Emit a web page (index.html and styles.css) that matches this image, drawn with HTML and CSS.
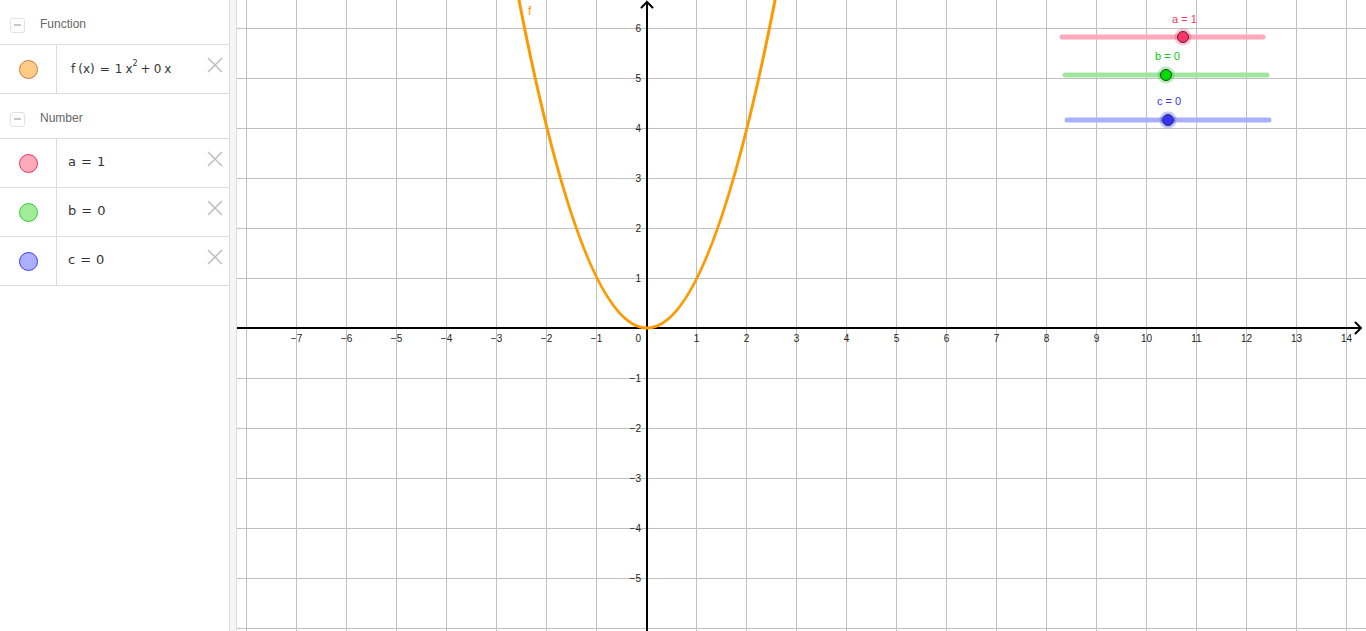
FILE: index.html
```html
<!DOCTYPE html>
<html>
<head>
<meta charset="utf-8">
<link rel="stylesheet" href="styles.css">
</head>
<body>
<div class="app">
  <div class="algebra">
    <div class="header">
      <span class="toggle"><span class="dash"></span></span>
      <span class="htitle">Function</span>
    </div>
    <div class="item">
      <div class="marble-cell"><span class="marble m-f"></span></div>
      <div class="formula fx"><span>f</span><span class="g2">(x)</span><span class="op">=</span><span>1</span><span class="g3">x</span><sup>2</sup><span class="op2">+</span><span>0</span><span class="g3">x</span></div>
      <svg class="close" viewBox="0 0 16 16"><path d="M1 1L15 15M15 1L1 15"/></svg>
    </div>
    <div class="header">
      <span class="toggle"><span class="dash"></span></span>
      <span class="htitle">Number</span>
    </div>
    <div class="item">
      <div class="marble-cell"><span class="marble m-a"></span></div>
      <div class="formula">a<span class="op">=</span>1</div>
      <svg class="close" viewBox="0 0 16 16"><path d="M1 1L15 15M15 1L1 15"/></svg>
    </div>
    <div class="item">
      <div class="marble-cell"><span class="marble m-b"></span></div>
      <div class="formula">b<span class="op">=</span>0</div>
      <svg class="close" viewBox="0 0 16 16"><path d="M1 1L15 15M15 1L1 15"/></svg>
    </div>
    <div class="item">
      <div class="marble-cell"><span class="marble m-c"></span></div>
      <div class="formula">c<span class="op">=</span>0</div>
      <svg class="close" viewBox="0 0 16 16"><path d="M1 1L15 15M15 1L1 15"/></svg>
    </div>
  </div>
  <div class="splitter"></div>
  <div class="graphics">
    <svg class="canvas" width="1129" height="631" viewBox="237 0 1129 631">
      <path class="grid" d="M246.5 0V631M296.5 0V631M346.5 0V631M396.5 0V631M446.5 0V631M496.5 0V631M546.5 0V631M596.5 0V631M646.5 0V631M696.5 0V631M746.5 0V631M796.5 0V631M846.5 0V631M896.5 0V631M946.5 0V631M996.5 0V631M1046.5 0V631M1096.5 0V631M1146.5 0V631M1196.5 0V631M1246.5 0V631M1296.5 0V631M1346.5 0V631M237 28.5H1366M237 78.5H1366M237 128.5H1366M237 178.5H1366M237 228.5H1366M237 278.5H1366M237 378.5H1366M237 428.5H1366M237 478.5H1366M237 528.5H1366M237 578.5H1366M237 628.5H1366"/>
      <path class="axis" d="M237 328H1361M647 631V2"/>
      <path class="arrow" d="M641.5 7.5L647 2L652.5 7.5M1355.5 322.5L1361 328L1355.5 333.5"/>
      <g class="xlab">
        <text x="296.5" y="342">−7</text>
        <text x="346.5" y="342">−6</text>
        <text x="396.5" y="342">−5</text>
        <text x="446.5" y="342">−4</text>
        <text x="496.5" y="342">−3</text>
        <text x="546.5" y="342">−2</text>
        <text x="596.5" y="342">−1</text>
        <text x="696.5" y="342">1</text>
        <text x="746.5" y="342">2</text>
        <text x="796.5" y="342">3</text>
        <text x="846.5" y="342">4</text>
        <text x="896.5" y="342">5</text>
        <text x="946.5" y="342">6</text>
        <text x="996.5" y="342">7</text>
        <text x="1046.5" y="342">8</text>
        <text x="1096.5" y="342">9</text>
        <text x="1146.5" y="342">10</text>
        <text x="1196.5" y="342">11</text>
        <text x="1246.5" y="342">12</text>
        <text x="1296.5" y="342">13</text>
        <text x="1346.5" y="342">14</text>
      </g>
      <g class="ylab">
        <text x="641" y="342">0</text>
        <text x="641" y="32">6</text>
        <text x="641" y="82">5</text>
        <text x="641" y="132">4</text>
        <text x="641" y="182">3</text>
        <text x="641" y="232">2</text>
        <text x="641" y="282">1</text>
        <text x="641" y="382">−1</text>
        <text x="641" y="432">−2</text>
        <text x="641" y="482">−3</text>
        <text x="641" y="532">−4</text>
        <text x="641" y="582">−5</text>
      </g>
      <path class="curve" d="M517 -10Q647 666 777 -10"/>
      <text class="flabel" x="528" y="15">f</text>

      <line class="track t-a" x1="1062" y1="37" x2="1263" y2="37"/>
      <circle class="halo h-a" cx="1183" cy="37" r="8.5"/>
      <circle class="knob k-a" cx="1183" cy="37" r="5.5"/>
      <text class="slabel l-a" x="1172" y="22.5">a = 1</text>

      <line class="track t-b" x1="1065" y1="75" x2="1267" y2="75"/>
      <circle class="halo h-b" cx="1166" cy="75" r="8.5"/>
      <circle class="knob k-b" cx="1166" cy="75" r="5.5"/>
      <text class="slabel l-b" x="1155" y="60">b = 0</text>

      <line class="track t-c" x1="1067" y1="120" x2="1269" y2="120"/>
      <circle class="halo h-c" cx="1168" cy="120" r="8.5"/>
      <circle class="knob k-c" cx="1168" cy="120" r="5.5"/>
      <text class="slabel l-c" x="1157" y="105">c = 0</text>
    </svg>
  </div>
</div>
</body>
</html>
```
FILE: styles.css
```css
html, body {
  margin: 0;
  padding: 0;
  background: #fff;
  overflow: hidden;
}
.app {
  display: flex;
  width: 1366px;
  height: 631px;
}
.algebra {
  width: 229px;
  flex: none;
  border-right: 1px solid #dcdcdc;
  background: #fff;
  font-family: "Liberation Sans", Arial, sans-serif;
}
.splitter {
  width: 6px;
  flex: none;
  background: #f5f5f5;
  border-right: 1px solid #dcdcdc;
}
.graphics {
  flex: 1;
  overflow: hidden;
}
.canvas {
  display: block;
}
.header {
  height: 45px;
  box-sizing: border-box;
  padding-top: 4px;
  border-bottom: 1px solid #dcdcdc;
  display: flex;
  align-items: center;
  padding-left: 10px;
}
.toggle {
  width: 13px;
  height: 13px;
  margin-top: 2px;
  border: 1px solid #e2e2e2;
  border-radius: 3px;
  display: flex;
  align-items: center;
  justify-content: center;
}
.dash {
  width: 7px;
  height: 1.5px;
  background: #c8c8c8;
}
.htitle {
  margin-left: 15px;
  font-size: 12px;
  color: #666;
}
.item {
  height: 48px;
  border-bottom: 1px solid #dcdcdc;
  display: flex;
  align-items: stretch;
}
.marble-cell {
  width: 56px;
  flex: none;
  border-right: 1px solid #dcdcdc;
  display: flex;
  align-items: center;
  justify-content: center;
}
.marble {
  width: 17px;
  height: 17px;
  border-radius: 50%;
  border: 1px solid;
}
.m-f { background: #ffcc88; border-color: #c8773a; }
.m-a { background: #ffaabb; border-color: #ee3355; }
.m-b { background: #a0ec98; border-color: #33cc33; }
.m-c { background: #aab0ff; border-color: #3340ee; }
.formula {
  flex: 1;
  display: flex;
  align-items: center;
  padding-left: 11px;
  padding-bottom: 3px;
  font-family: "DejaVu Sans", sans-serif;
  font-size: 13px;
  color: #333;
  white-space: nowrap;
}
.formula .op {
  margin: 0 5px;
}
.fx {
  padding-left: 14px;
  padding-bottom: 0;
  padding-top: 0;
  font-size: 12px;
}
.fx .g2 { margin-left: 3px; }
.fx .g3 { margin-left: 3px; }
.fx .op { margin: 0 5px 0 5px; }
.fx .op2 { margin: 0 3px 0 3px; }
.fx sup {
  font-size: 8px;
  align-self: flex-start;
  margin-top: 14px;
}
.close {
  width: 16px;
  height: 16px;
  flex: none;
  margin: 12px 6px 0 0;
}
.close path {
  stroke: #c0c0c0;
  stroke-width: 1.6;
  fill: none;
}
.grid {
  stroke: #c0c0c0;
  stroke-width: 1;
  fill: none;
}
.axis {
  stroke: #000;
  stroke-width: 2;
  fill: none;
}
.arrow {
  stroke: #000;
  stroke-width: 2;
  fill: none;
  stroke-linecap: round;
  stroke-linejoin: miter;
}
.xlab text, .ylab text {
  font-family: "Liberation Sans", Arial, sans-serif;
  font-size: 10px;
  fill: #222;
}
.xlab text { text-anchor: middle; }
.ylab text { text-anchor: end; }
.curve {
  stroke: #ff9900;
  stroke-width: 3;
  fill: none;
}
.flabel {
  font-family: "Liberation Sans", Arial, sans-serif;
  font-size: 12px;
  fill: #ff9900;
}
.track {
  stroke-width: 5;
  stroke-linecap: round;
}
.t-a { stroke: #ffa8bc; }
.t-b { stroke: #a0e6a0; }
.t-c { stroke: #aab0ff; }
.halo { stroke: none; }
.h-a { fill: #ff3366; opacity: 0.3; }
.h-b { fill: #00cc00; opacity: 0.3; }
.h-c { fill: #3333ff; opacity: 0.3; }
.knob {
  stroke: #333;
  stroke-width: 1;
}
.k-a { fill: #ff3366; }
.k-b { fill: #00dd00; }
.k-c { fill: #3333ff; }
.slabel {
  font-family: "Liberation Sans", Arial, sans-serif;
  font-size: 11px;
}
.l-a { fill: #ff3366; }
.l-b { fill: #00cc00; }
.l-c { fill: #3333ff; }
```
